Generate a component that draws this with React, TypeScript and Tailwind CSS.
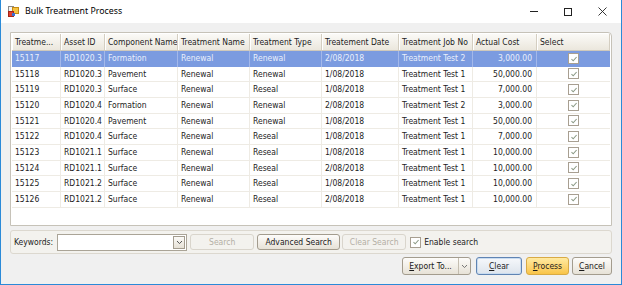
import React from 'react';

const rows = [
  ['15117', 'RD1020.3', 'Formation', 'Renewal', 'Renewal', '2/08/2018', 'Treatment Test 2', '3,000.00'],
  ['15118', 'RD1020.3', 'Pavement', 'Renewal', 'Renewal', '1/08/2018', 'Treatment Test 1', '50,000.00'],
  ['15119', 'RD1020.3', 'Surface', 'Renewal', 'Reseal', '1/08/2018', 'Treatment Test 1', '7,000.00'],
  ['15120', 'RD1020.4', 'Formation', 'Renewal', 'Renewal', '2/08/2018', 'Treatment Test 2', '3,000.00'],
  ['15121', 'RD1020.4', 'Pavement', 'Renewal', 'Renewal', '1/08/2018', 'Treatment Test 1', '50,000.00'],
  ['15122', 'RD1020.4', 'Surface', 'Renewal', 'Reseal', '1/08/2018', 'Treatment Test 1', '7,000.00'],
  ['15123', 'RD1021.1', 'Surface', 'Renewal', 'Reseal', '1/08/2018', 'Treatment Test 1', '10,000.00'],
  ['15124', 'RD1021.1', 'Surface', 'Renewal', 'Reseal', '2/08/2018', 'Treatment Test 1', '10,000.00'],
  ['15125', 'RD1021.2', 'Surface', 'Renewal', 'Reseal', '1/08/2018', 'Treatment Test 1', '10,000.00'],
  ['15126', 'RD1021.2', 'Surface', 'Renewal', 'Reseal', '2/08/2018', 'Treatment Test 1', '10,000.00'],
];

const headers = [
  'Treatme...',
  'Asset ID',
  'Component Name',
  'Treatment Name',
  'Treatment Type',
  'Treatement Date',
  'Treatment Job No',
  'Actual Cost',
  'Select',
];

const cols = 'grid grid-cols-[49px_44px_73px_72px_72px_77px_74px_64px_73px]';
const uiFont = { fontFamily: '"DejaVu Sans Condensed", "DejaVu Sans", sans-serif', fontStretch: 'condensed' } as const;

function AppIcon() {
  return (
    <svg width="11" height="11" viewBox="0 0 11 11">
      <rect x="0.5" y="0.5" width="5" height="5" fill="#f4f4f4" stroke="#8a8a8a" />
      <rect x="4.5" y="1.5" width="6" height="6" fill="#f6c342" stroke="#c58a12" />
      <rect x="0.5" y="5.5" width="5" height="5" fill="#e0412f" stroke="#a52516" />
      <rect x="4" y="7" width="3" height="3" fill="#3d6fd1" />
    </svg>
  );
}

function CheckBox() {
  return (
    <span className="inline-flex h-[11px] w-[11px] items-center justify-center border border-[#a89f91] bg-white">
      <svg width="8" height="8" viewBox="0 0 8 8">
        <path d="M1.5 4.2 L3.2 5.8 L6.6 2" fill="none" stroke="#8c9a86" strokeWidth="1.1" />
      </svg>
    </span>
  );
}

function Btn({
  children,
  className = '',
  disabled = false,
}: {
  children: React.ReactNode;
  className?: string;
  disabled?: boolean;
}) {
  return (
    <div
      className={`flex items-center justify-center rounded-[3px] border ${
        disabled
          ? 'border-[#d9d5cc] bg-[#f3f2ee] text-[#b3afa5]'
          : 'border-[#a39c8e] bg-gradient-to-b from-[#fdfcfa] to-[#e7e2d7] text-[#1a1a1a]'
      } ${className}`}
    >
      {children}
    </div>
  );
}

export default function App() {
  return (
    <div
      className="flex h-[285px] w-[622px] flex-col border-x border-b border-[#2a8ad8] bg-[#f0f0f0] text-[8.5px] text-[#1c1c1c]"
      style={uiFont}
    >
      {/* Title bar */}
      <div className="flex h-[23px] shrink-0 items-center bg-white pl-[7px]">
        <AppIcon />
        <span
          className="ml-[6px] text-[8.8px] text-black"
          style={{ fontFamily: '"Noto Sans", "Open Sans", sans-serif', fontStretch: 'normal' }}
        >
          Bulk Treatment Process
        </span>
        <div className="ml-auto flex items-center">
          <div className="flex w-[34px] justify-center">
            <div className="h-px w-[8px] bg-[#222]" />
          </div>
          <div className="flex w-[34px] justify-center">
            <div className="h-[8px] w-[8px] border border-[#222]" />
          </div>
          <div className="flex w-[36px] justify-center pr-[2px]">
            <svg width="9" height="9" viewBox="0 0 9 9">
              <path d="M0.5 0.5 L8.5 8.5 M8.5 0.5 L0.5 8.5" stroke="#222" strokeWidth="0.9" />
            </svg>
          </div>
        </div>
      </div>

      <div className="flex flex-1 flex-col px-[9px]">
        {/* Grid */}
        <div className="mt-[9px] flex h-[194px] flex-col rounded-tr-[4px] border border-[#c6c2b8] bg-white p-px">
          <div
            className={`${cols} h-[17px] rounded-tr-[3px] border-b border-[#cfc9bc] bg-gradient-to-b from-[#fbfaf7] to-[#ebe7dd]`}
          >
            {headers.map((h) => (
              <div
                key={h}
                className="flex items-center overflow-hidden whitespace-nowrap border-r border-[#d4cec1] pl-[3px] shadow-[inset_1px_0_0_#ffffff]"
              >
                {h}
              </div>
            ))}
          </div>
          {rows.map((r, i) => {
            const sel = i === 0;
            return (
              <div
                key={r[0]}
                className={`${cols} h-[15.67px] ${sel ? 'bg-[#7b9be0] text-[#e9effc]' : 'border-b border-[#eeebe4]'}`}
              >
                {r.map((c, j) => (
                  <div
                    key={j}
                    className={`flex items-center overflow-hidden whitespace-nowrap border-r ${
                      sel ? 'border-[#a3b8ea]' : 'border-[#eeebe4]'
                    } ${j === 7 ? 'justify-end pr-[4px]' : 'pl-[3px]'}`}
                  >
                    {c}
                  </div>
                ))}
                <div className="flex items-center justify-center">
                  <CheckBox />
                </div>
              </div>
            );
          })}
        </div>

        {/* Search panel */}
        <div className="mt-[4px] flex h-[24px] items-center rounded-[3px] border border-[#dcd8cf] bg-[#f3f2ee] pl-[3px]">
          <span>Keywords:</span>
          <div className="ml-[4px] flex h-[17px] w-[130px] items-center justify-end border border-[#aaa497] bg-white pr-[1px]">
            <div className="flex h-[13px] w-[12px] items-center justify-center border border-[#a39c8e] bg-gradient-to-b from-[#fbfaf7] to-[#e6e1d6]">
              <svg width="7" height="5" viewBox="0 0 7 5">
                <path d="M1 1 L3.5 3.6 L6 1" fill="none" stroke="#555" strokeWidth="1" />
              </svg>
            </div>
          </div>
          <Btn disabled className="ml-[3px] h-[16px] w-[64px]">
            Search
          </Btn>
          <Btn className="ml-[3px] h-[16px] w-[83px]">Advanced Search</Btn>
          <Btn disabled className="ml-[2px] h-[16px] w-[64px]">
            Clear Search
          </Btn>
          <div className="ml-[4px] flex items-center">
            <CheckBox />
            <span className="ml-[3px]">Enable search</span>
          </div>
        </div>

        {/* Bottom buttons */}
        <div className="mt-[3px] flex h-[18px] items-center justify-end">
          <Btn className="h-[18px] w-[69px] !justify-start">
            <span className="flex h-full w-[56px] items-center justify-center border-r border-[#c4bdb0]">
              <span className="underline decoration-[0.5px] underline-offset-1">E</span>xport To...
            </span>
            <span className="flex flex-1 items-center justify-center">
              <svg width="7" height="5" viewBox="0 0 7 5">
                <path d="M1 1 L3.5 3.6 L6 1" fill="none" stroke="#777" strokeWidth="1" />
              </svg>
            </span>
          </Btn>
          <div className="ml-[5px] flex h-[18px] w-[46px] items-center justify-center rounded-[3px] border border-[#5f84b3] bg-gradient-to-b from-[#f6f8fb] to-[#dde4ec] shadow-[inset_0_0_0_1px_#c9dcf0]">
            <span className="underline decoration-[0.5px] underline-offset-1">C</span>lear
          </div>
          <div className="ml-[4px] flex h-[18px] w-[43px] items-center justify-center rounded-[3px] border border-[#d8aa45] bg-gradient-to-b from-[#ffeaa0] to-[#f9c446]">
            <span className="underline decoration-[0.5px] underline-offset-1">P</span>rocess
          </div>
          <Btn className="ml-[3px] h-[18px] w-[40px]">
            <span className="underline decoration-[0.5px] underline-offset-1">C</span>ancel
          </Btn>
        </div>
      </div>
    </div>
  );
}
